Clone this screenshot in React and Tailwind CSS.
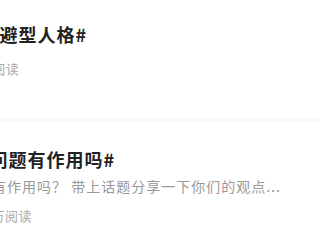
import React from "react";

export default function App() {
  const font = { fontFamily: '"Noto Sans CJK SC", "Noto Sans", sans-serif' };

  return (
    <div className="w-[320px] h-[240px] overflow-hidden bg-white" style={font}>
      <div className="h-[118px] pt-[24px] whitespace-nowrap">
        <p className="-ml-[31px] text-[18px] leading-[20px] font-bold tracking-[1px] text-[#222]">#回避型人格#</p>
        <p className="-ml-[29px] mt-[17px] text-[13px] leading-[16px] tracking-[0.5px] text-[#aaa]">2万阅读</p>
      </div>

      <div className="h-[3px] bg-[#f8f8f8]" />

      <div className="pt-[28px] whitespace-nowrap">
        <p className="-ml-[22px] text-[18px] leading-[20px] font-bold tracking-[1px] text-[#222]">#问题有作用吗#</p>
        <p className="-ml-[68px] mt-[9px] text-[14px] leading-[16px] tracking-[1px] text-[#999]">这个问题有作用吗？ 带上话题分享一下你们的观点...</p>
        <p className="-ml-[28px] mt-[14px] text-[13px] leading-[16px] tracking-[0.5px] text-[#aaa]">1.2万阅读</p>
      </div>
    </div>
  );
}
